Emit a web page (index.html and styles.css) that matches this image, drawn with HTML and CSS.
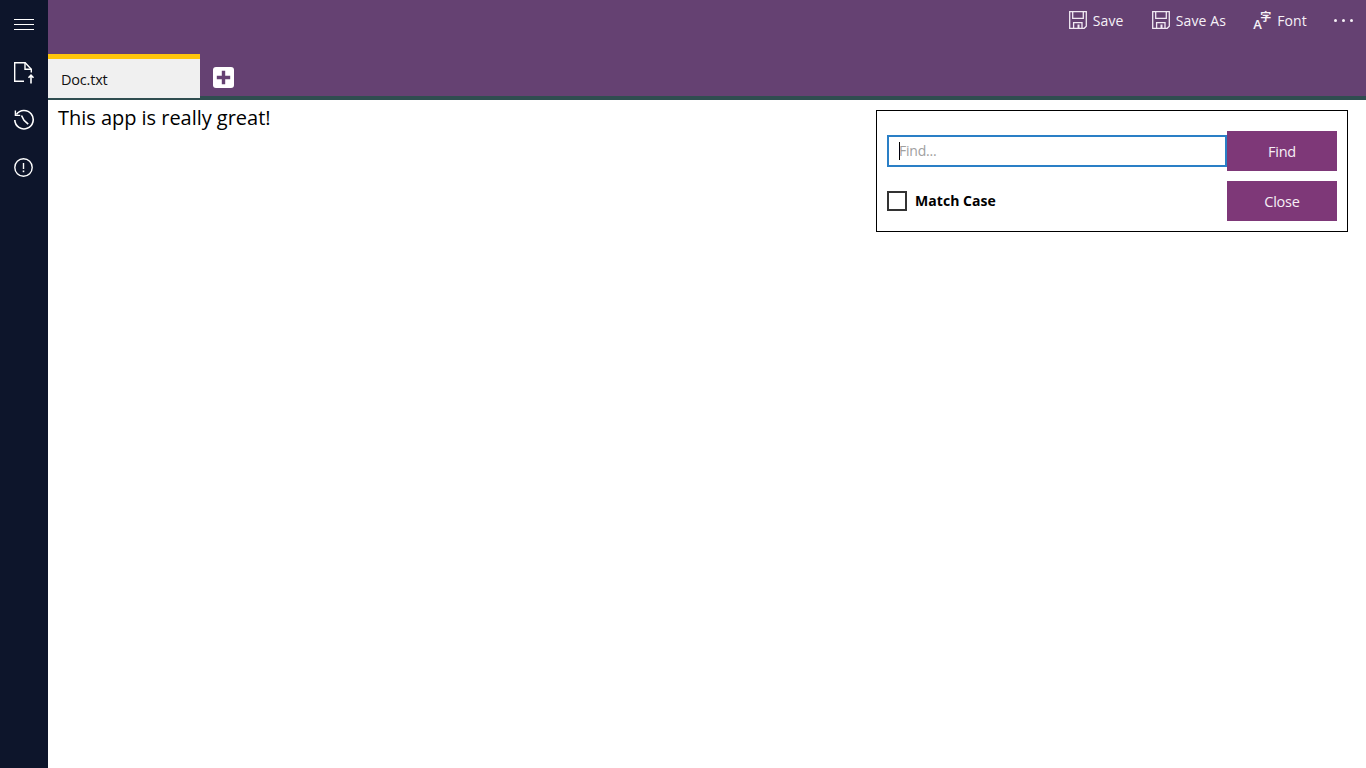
FILE: index.html
```html
<!DOCTYPE html>
<html lang="en">
<head>
<meta charset="utf-8">
<title>Doc.txt</title>
<link rel="stylesheet" href="styles.css">
</head>
<body>
<div class="app">
  <nav class="rail">
    <button class="rail-btn menu" aria-label="Menu">
      <svg width="20" height="12" viewBox="0 0 20 12"><path d="M0 .5h20M0 5.5h20M0 10.5h20" stroke="#fff" fill="none"/></svg>
    </button>
    <button class="rail-btn" aria-label="Open">
      <svg width="22" height="24" viewBox="0 0 22 24" fill="none" stroke="#fff" stroke-width="1.4"><path d="M11 20.3H1.7V1.7h10.5l6.1 6.5v3.3"/><path d="M12 1.7v6.5h6.3"/><path d="M18 22.5v-8M15.5 16.8l2.5-2.6 2.5 2.6" stroke-width="1.6"/></svg>
    </button>
    <button class="rail-btn" aria-label="History">
      <svg width="22" height="22" viewBox="0 0 22 22" fill="none" stroke="#fff" stroke-width="1.6"><path d="M3.4 5.5A9.2 9.2 0 1 1 1.8 11"/><path d="M2.4 1.6V6.4H7.2" stroke-width="1.4"/><path d="M8.5 6.5l2.5 4.8 4.2 3.9"/></svg>
    </button>
    <button class="rail-btn about" aria-label="About">
      <svg width="19" height="19" viewBox="0 0 19 19" fill="none" stroke="#fff"><circle cx="9.5" cy="9.5" r="8.7" stroke-width="1.4"/><path d="M9.5 5v6" stroke-width="1.4"/><path d="M9.5 12.5v1.7" stroke-width="1.6"/></svg>
    </button>
  </nav>
  <div class="main">
    <header class="top">
      <div class="commands">
        <button class="cmd cmd-save">
          <svg class="cmd-icon" width="18" height="18" viewBox="0 0 18 18" fill="none" stroke="#f1e9f3" stroke-width="1.3"><path d="M.7.7h16.6v14.5l-2.1 2.1H.7z"/><path d="M3.7 1v6.3h10.6V1"/><path d="M4.6 17v-5.4h8.4V17"/><path d="M9.5 13.5v3.5" stroke-width="2"/></svg>
          <span class="cmd-label">Save</span>
        </button>
        <button class="cmd">
          <svg class="cmd-icon" width="18" height="18" viewBox="0 0 18 18" fill="none" stroke="#f1e9f3" stroke-width="1.3"><path d="M.7.7h16.6v14.5l-2.1 2.1H.7z"/><path d="M3.7 1v6.3h10.6V1"/><path d="M4.6 17v-5.4h8.4V17"/><path d="M9.5 13.5v3.5" stroke-width="2"/></svg>
          <span class="cmd-label">Save As</span>
        </button>
        <button class="cmd cmd-font">
          <span class="font-icon"><span class="glyph-a">A</span><span class="glyph-zi">字</span></span>
          <span class="cmd-label">Font</span>
        </button>
        <button class="cmd-more" aria-label="More">
          <i></i><i></i><i></i>
        </button>
      </div>
      <div class="tabs">
        <div class="tab">Doc.txt</div>
        <button class="add" aria-label="New tab">
          <svg width="21" height="21" viewBox="0 0 21 21"><rect width="21" height="21" rx="3" fill="#fff"/><path d="M10.5 3.8v13.4M3.8 10.5h13.4" stroke="#654172" stroke-width="3.4"/></svg>
        </button>
      </div>
    </header>
    <main class="doc">
      <p class="text">This app is really great!</p>
      <section class="find">
        <div class="find-row first">
          <div class="input"><span class="caret"></span><span class="placeholder">Find...</span></div>
          <button class="action">Find</button>
        </div>
        <div class="find-row second">
          <label class="match"><span class="check"></span><span class="match-label">Match Case</span></label>
          <button class="action">Close</button>
        </div>
      </section>
    </main>
  </div>
</div>
</body>
</html>
```
FILE: styles.css
```css
* { box-sizing: border-box; }
html, body { margin: 0; height: 100%; overflow: hidden; }
body { font-family: "Open Sans", "Noto Sans", "Liberation Sans", sans-serif; background: #fff; color: #000; }
button { border: 0; background: none; padding: 0; margin: 0; font: inherit; color: inherit; }

.app { display: flex; height: 768px; }

.rail { width: 48px; flex: none; background: #0d152b; display: flex; flex-direction: column; align-items: center; }
.rail-btn { width: 48px; height: 48px; display: flex; align-items: center; justify-content: center; }
.rail-btn:nth-child(2) { padding-top: 2px; }
.menu { padding-top: 2px; }
.about { padding: 0 1px 1px 0; }

.main { flex: 1; display: flex; flex-direction: column; min-width: 0; }

.top { height: 100px; flex: none; background: #654172; border-bottom: 4px solid #2f4d50; display: flex; flex-direction: column; }

.commands { height: 54px; flex: none; display: flex; justify-content: flex-end; align-items: flex-start; padding-top: 11px; padding-right: 13px; color: #f6f1f7; font-size: 14px; }
.cmd { display: flex; align-items: center; gap: 6px; height: 18px; margin-right: 27px; line-height: 18px; }
.cmd-save { margin-right: 28px; }
.cmd-icon { display: block; }
.cmd-label { display: block; padding-top: 2px; letter-spacing: 0.15px; }
.cmd-font { gap: 5px; }

.font-icon { width: 19px; height: 20px; position: relative; display: block; }
.glyph-a { position: absolute; left: 0; bottom: -1px; font-size: 13px; line-height: 14px; font-weight: 600; }
.glyph-zi { position: absolute; right: 1px; top: 0; font-family: "Noto Sans CJK SC", sans-serif; font-size: 11px; line-height: 13px; font-weight: 700; }

.cmd-more { display: flex; gap: 5px; height: 18px; align-items: center; }
.cmd-more i { width: 3px; height: 3px; border-radius: 50%; background: #f6f1f7; display: block; }

.tabs { height: 42px; flex: none; display: flex; align-items: flex-start; }
.tab { width: 152px; height: 44px; background: #f0f0f0; border-top: 5px solid #fec50c; padding-left: 13px; font-size: 14.5px; line-height: 42px; color: #111; letter-spacing: -0.2px; }
.add { margin: 13px 0 0 13px; width: 21px; height: 21px; display: block; }
.add svg { display: block; }

.doc { flex: 1; position: relative; min-height: 0; }
.text { margin: 0; padding: 3px 0 0 10px; font-size: 20px; line-height: 30px; letter-spacing: -0.03px; }

.find { position: absolute; left: 828px; top: 10px; width: 472px; height: 122px; border: 1px solid #000; background: #fff; padding: 20px 10px 10px; display: flex; flex-direction: column; gap: 10px; }
.find-row { display: flex; justify-content: space-between; align-items: center; height: 40px; }

.input { width: 340px; height: 32px; border: 2px solid #2a7fc6; display: flex; align-items: center; padding-left: 10px; font-size: 14px; color: #a0a0a0; letter-spacing: -0.2px; }
.caret { width: 1px; height: 18px; background: #000; margin-right: -1px; display: block; }
.placeholder { display: block; padding-bottom: 2px; }

.action { width: 110px; height: 40px; background: #7e3878; color: #f6eff6; font-size: 14.5px; letter-spacing: -0.2px; }

.match { display: flex; align-items: center; gap: 8px; font-size: 14px; font-weight: 700; color: #000; }
.match-label { display: block; padding-bottom: 2px; letter-spacing: 0.05px; }
.check { width: 20px; height: 20px; border: 2px solid #333; display: block; }
```
